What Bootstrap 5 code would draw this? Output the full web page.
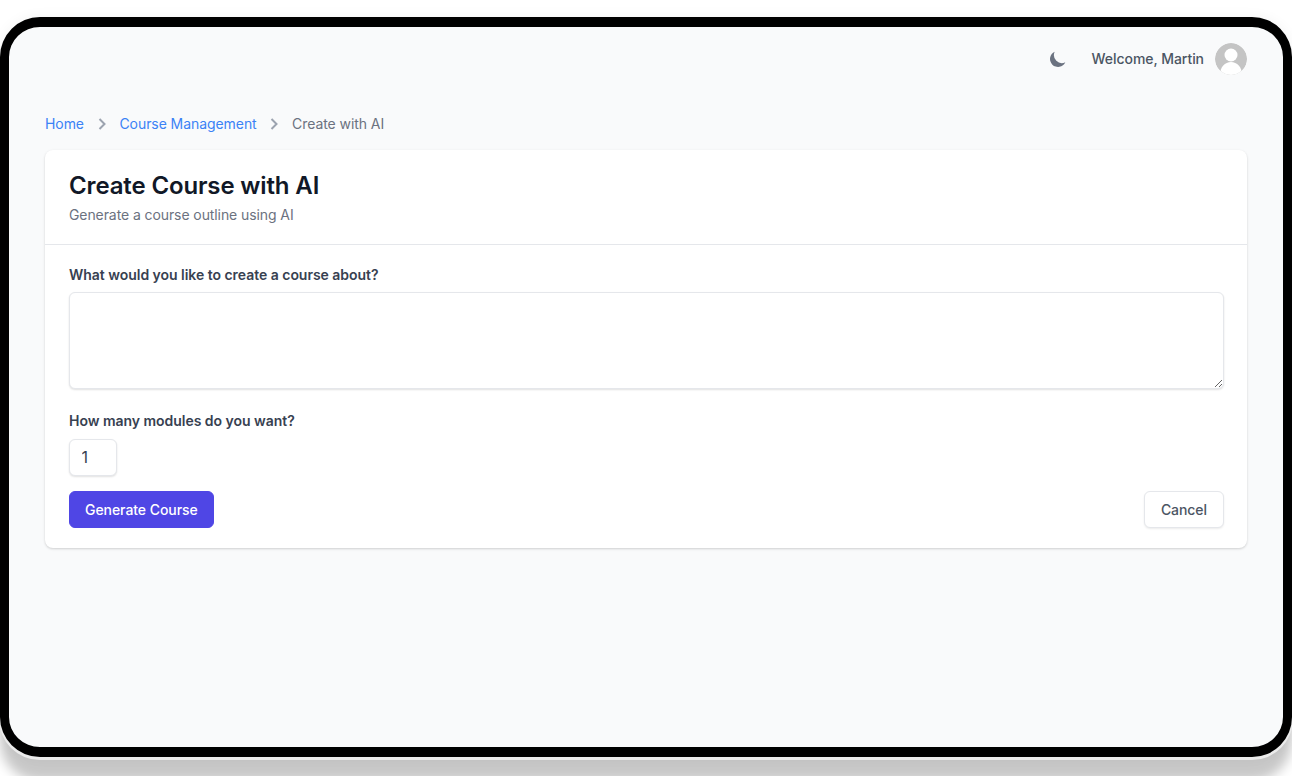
<!DOCTYPE html>
<html lang="en">

<head>
    <meta charset="UTF-8">
    <meta name="viewport" content="width=device-width, initial-scale=1.0">
    <title>Create Course with AI</title>
    <link rel="stylesheet" href="https://cdn.jsdelivr.net/npm/bootstrap@5.3.0/dist/css/bootstrap.min.css">
    <style>
        html, body { height: 776px; overflow: hidden; }
        body {
            background: #fff;
            font-family: "Inter", "Liberation Sans", sans-serif;
            padding-top: 17px;
        }
        .device-frame {
            height: 740px;
            border: 10px solid #000;
            border-left-width: 9px;
            border-right-width: 9px;
            border-radius: 40px;
            background: #f9fafb;
            padding: 16px 36px 0;
            box-shadow: 0 2px 0 1px #ebebeb, 0 0 14px rgba(0, 0, 0, .05), 0 24px 12px rgba(0, 0, 0, .22);
        }
        .top-bar { height: 32px; margin-bottom: 39px; }
        .moon-icon { width: 20px; height: 20px; margin-right: 24px; }
        .welcome-text { font-size: 14px; font-weight: 500; color: #4b5563; margin: 0 11px 2px 0; letter-spacing: -.05px; }
        .avatar-pic { width: 32px; height: 32px; border-radius: 50%; display: block; }
        .crumbs { font-size: 14px; line-height: 20px; height: 20px; margin-bottom: 16px; color: #6b7280; letter-spacing: -.07px; }
        .crumbs a { color: #3b82f6; text-decoration: none; }
        .crumb-sep { width: 20px; height: 20px; margin: 0 7.75px; }
        .form-panel {
            background: #fff;
            border: 0;
            border-radius: 8px;
            box-shadow: 0 1px 3px rgba(0, 0, 0, .12), 0 1px 2px rgba(0, 0, 0, .06);
        }
        .panel-head { padding: 20px 24px 19px; border-bottom: 1px solid #e5e7eb; }
        .panel-head h1 { font-size: 24px; line-height: 32px; font-weight: 600; color: #111827; margin: 0 0 3px; letter-spacing: -.14px; }
        .panel-head p { font-size: 14px; line-height: 20px; color: #6b7280; margin: 0; letter-spacing: -.09px; }
        .panel-body { padding: 20px 23px 20px 24px; }
        .field-label { display: block; font-size: 14px; line-height: 20px; font-weight: 600; color: #374151; margin-bottom: 7px; letter-spacing: -.03px; }
        .topic-input {
            display: block;
            width: 100%;
            height: 97px;
            border: 1px solid #e5e7eb;
            border-radius: 6px;
            box-shadow: 0 1px 2px rgba(0, 0, 0, .12);
            margin-bottom: 22px;
            padding: 8px 12px;
        }
        .modules-input {
            width: 48px;
            height: 37px;
            border: 1px solid #e5e7eb;
            border-radius: 6px;
            box-shadow: 0 1px 2px rgba(0, 0, 0, .12);
            padding: 0 12px 2px 11.500px;
            font-size: 16px;
            color: #374151;
            margin-bottom: 15px;
            display: block;
            -moz-appearance: textfield;
        }
        .modules-input::-webkit-inner-spin-button { display: none; }
        .btn-generate, .btn-cancel {
            height: 37px;
            font-size: 14px;
            font-weight: 500;
            border-radius: 6px;
            letter-spacing: -.06px;
        }
        .btn-generate { background: #4f46e5; border: 1px solid #4f46e5; color: #fff; padding: 0 15px; }
        .btn-cancel { background: #fff; border: 1px solid #e5e7eb; color: #4b5563; box-shadow: 0 1px 2px rgba(0, 0, 0, .08); padding: 0 16px; }
    </style>
</head>

<body>
    <div class="device-frame">
        <!-- Top bar -->
        <div class="top-bar d-flex justify-content-end align-items-center">
            <svg class="moon-icon" viewBox="0 0 20 20" fill="#6b7280">
                <path d="M17.3 13.3A8 8 0 0 1 6.7 2.7a8 8 0 1 0 10.6 10.6z" />
            </svg>
            <span class="welcome-text">Welcome, Martin</span>
            <svg class="avatar-pic" viewBox="0 0 32 32">
                <defs>
                    <clipPath id="avatarClip">
                        <circle cx="16" cy="16" r="16" />
                    </clipPath>
                </defs>
                <g clip-path="url(#avatarClip)">
                    <rect width="32" height="32" fill="#c4c4c4" />
                    <circle cx="16" cy="12" r="6.500" fill="#fff" />
                    <path d="M5 32c0-8 5-13 11-13s11 5 11 13z" fill="#fff" />
                </g>
            </svg>
        </div>

        <!-- Breadcrumb -->
        <nav class="crumbs d-flex align-items-center">
            <a href="#">Home</a>
            <svg class="crumb-sep" viewBox="0 0 20 20" fill="none" stroke="#9ca3af" stroke-width="2">
                <path d="M7.500 5l5 5-5 5" />
            </svg>
            <a href="#">Course Management</a>
            <svg class="crumb-sep" viewBox="0 0 20 20" fill="none" stroke="#9ca3af" stroke-width="2">
                <path d="M7.500 5l5 5-5 5" />
            </svg>
            <span>Create with AI</span>
        </nav>

        <!-- Form card -->
        <div class="card form-panel">
            <div class="panel-head">
                <h1>Create Course with AI</h1>
                <p>Generate a course outline using AI</p>
            </div>
            <form class="panel-body">
                <label class="field-label" for="topic">What would you like to create a course about?</label>
                <textarea id="topic" class="topic-input"></textarea>
                <label class="field-label mb-2" for="modules">How many modules do you want?</label>
                <input id="modules" class="modules-input" type="number" value="1">
                <div class="d-flex justify-content-between">
                    <button type="button" class="btn btn-generate">Generate Course</button>
                    <button type="button" class="btn btn-cancel">Cancel</button>
                </div>
            </form>
        </div>
    </div>
    <script src="https://cdn.jsdelivr.net/npm/bootstrap@5.3.0/dist/js/bootstrap.bundle.min.js"></script>
</body>

</html>
